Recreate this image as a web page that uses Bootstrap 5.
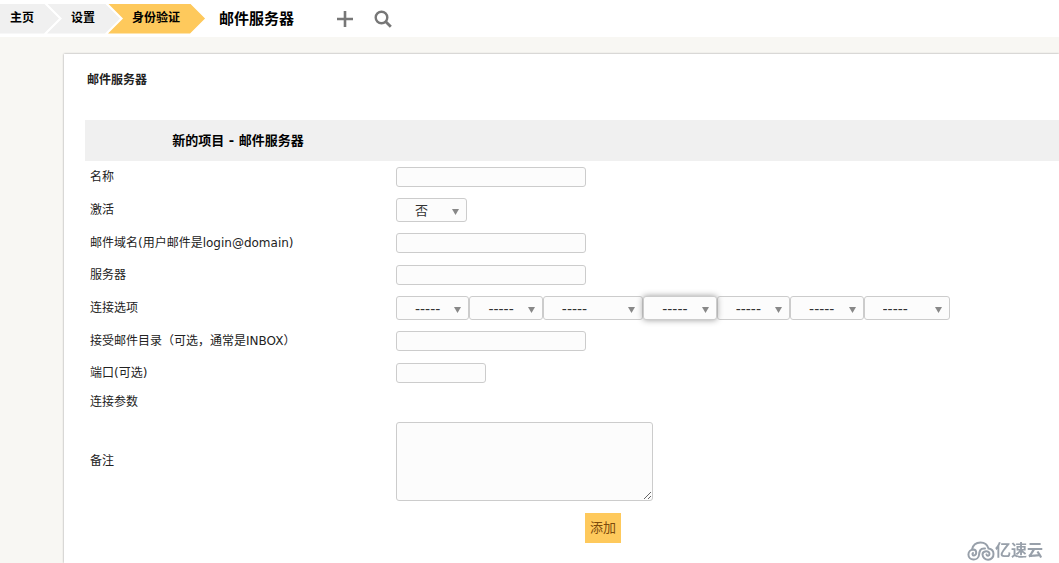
<!DOCTYPE html>
<html lang="zh-CN">
<head>
<meta charset="utf-8">
<meta name="viewport" content="width=device-width, initial-scale=1">
<title>邮件服务器</title>
<link href="https://cdn.jsdelivr.net/npm/bootstrap@5.3.0/dist/css/bootstrap.min.css" rel="stylesheet">
<style>
  body { background: #f8f7f3; color: #222; font: 12px/18px "DejaVu Sans", "Noto Sans CJK SC", sans-serif; }
  .topbar { height: 37px; }
  .crumbs a {
    display: block; height: 30px; line-height: 28px; margin-left: -12px; padding: 0 25px 0 24px;
    color: #000; background: #f0f0f0; font-weight: 700; text-decoration: none;
    clip-path: polygon(0 0, calc(100% - 15px) 0, 100% 50%, calc(100% - 15px) 100%, 0 100%, 15px 50%);
  }
  .crumbs li:first-child a { margin-left: 0; padding-left: 10px; clip-path: polygon(0 0, calc(100% - 15px) 0, 100% 50%, calc(100% - 15px) 100%, 0 100%); }
  .crumbs .current a { background: #fec95c; }
  .page-title { font-size: 15px; font-weight: 700; line-height: 20px; color: #000; margin-left: 14px; }
  .tools { margin-left: 42px; gap: 20px; }
  .tool { color: #777; line-height: 0; }
  .sheet { margin: 17px 0 0 64px; padding-left: 21px; box-shadow: 0 0 2px #999; }
  .sheet h2 { font-size: 12px; line-height: 18px; font-weight: 700; margin: 0; padding: 17px 2px 31px; }
  .form-grid { width: 100%; table-layout: fixed; }
  .form-grid th, .form-grid td { height: 32px; padding: 0 5px; vertical-align: middle; }
  .form-grid thead th { height: 41px; background: #f0f0f0; color: #000; font-size: 13px; text-align: center; }
  .form-grid tbody th { font-weight: 400; }
  .form-grid .tall > * { height: 34px; }
  .form-grid .plain > * { height: 26px; }
  .form-grid .notes > * { height: 92px; }
  .form-grid .submit > * { height: 42px; }
  .col-label { width: 306px; }
  .field { display: block; background: #fcfcfc; border: 1px solid #ccc; border-radius: 3px; color: #333; }
  input.field { width: 190px; height: 20px; padding: 0 4px; }
  input.field.narrow { width: 90px; }
  textarea.field { width: 257px; height: 79px; padding: 4px; }
  select.field {
    appearance: none; height: 24px; padding: 2px 18px 0; font-size: 13px; line-height: 20px;
    background: #fcfcfc url("data:image/svg+xml,%3Csvg xmlns='http://www.w3.org/2000/svg' width='7' height='6'%3E%3Cpath d='M0 0h7L3.5 6z' fill='%23888'/%3E%3C/svg%3E") no-repeat right 7px top 10px;
  }
  .yesno { width: 71px; }
  .options { max-width: 554px; }
  .options .field { flex: 1 1 73px; min-width: 0; font-size: 14px; padding-right: 10px; }
  .options .wide { flex-basis: 100px; }
  .options .medium { flex-basis: 86px; }
  .options .lit { box-shadow: 0 0 6px #999; z-index: 1; }
  .btn-add { margin-left: 189px; height: 30px; padding: 0 5px; border: 0; background: #fec95c; color: #7c4a0c; font-size: 13px; }
  .watermark { position: fixed; right: 16px; bottom: 2px; color: #98a0aa; font-size: 16px; font-weight: 700; line-height: 20px; }
</style>
</head>
<body class="d-flex flex-column min-vh-100">
<header class="topbar bg-white d-flex align-items-center flex-shrink-0">
  <nav aria-label="导航">
    <ul class="crumbs list-unstyled d-flex m-0">
      <li><a href="#">主页</a></li>
      <li><a href="#">设置</a></li>
      <li class="current"><a href="#">身份验证</a></li>
    </ul>
  </nav>
  <h1 class="page-title mb-0">邮件服务器</h1>
  <div class="tools d-flex align-items-center">
    <a href="#" class="tool" aria-label="添加">
      <svg width="18" height="18" viewBox="0 0 18 18"><path d="M9 1v16M1 9h16" stroke="currentColor" stroke-width="2.6"/></svg>
    </a>
    <a href="#" class="tool" aria-label="搜索">
      <svg width="18" height="18" viewBox="0 0 18 18" fill="none" stroke="currentColor"><circle cx="7.5" cy="7.5" r="5.8" stroke-width="2.4"/><path d="M11.8 11.8l5 5" stroke-width="2.8"/></svg>
    </a>
  </div>
</header>
<main class="sheet bg-white flex-grow-1">
  <h2>邮件服务器</h2>
  <form>
    <table class="form-grid">
      <colgroup><col class="col-label"><col></colgroup>
      <thead><tr><th>新的项目 - 邮件服务器</th><th></th></tr></thead>
      <tbody>
        <tr><th><label for="name">名称</label></th><td><input class="field" id="name" type="text"></td></tr>
        <tr class="tall"><th><label for="active">激活</label></th><td><select class="field yesno" id="active"><option>否</option><option>是</option></select></td></tr>
        <tr><th><label for="domain">邮件域名(用户邮件是login@domain)</label></th><td><input class="field" id="domain" type="text"></td></tr>
        <tr><th><label for="server">服务器</label></th><td><input class="field" id="server" type="text"></td></tr>
        <tr class="tall"><th><label for="option1">连接选项</label></th><td>
          <div class="options d-flex">
            <select class="field" id="option1"><option>-----</option></select>
            <select class="field" aria-label="连接选项 2"><option>-----</option></select>
            <select class="field wide" aria-label="连接选项 3"><option>-----</option></select>
            <select class="field lit" aria-label="连接选项 4"><option>-----</option></select>
            <select class="field" aria-label="连接选项 5"><option>-----</option></select>
            <select class="field" aria-label="连接选项 6"><option>-----</option></select>
            <select class="field medium" aria-label="连接选项 7"><option>-----</option></select>
          </div></td></tr>
        <tr><th><label for="folder">接受邮件目录（可选，通常是INBOX）</label></th><td><input class="field" id="folder" type="text"></td></tr>
        <tr><th><label for="port">端口(可选)</label></th><td><input class="field narrow" id="port" type="text"></td></tr>
        <tr class="plain"><th>连接参数</th><td></td></tr>
        <tr class="notes"><th><label for="notes">备注</label></th><td><textarea class="field" id="notes"></textarea></td></tr>
        <tr class="submit"><td></td><td><button class="btn-add" type="submit">添加</button></td></tr>
      </tbody>
    </table>
  </form>
</main>
<div class="watermark d-flex align-items-center">
  <svg width="28" height="20" viewBox="0 0 28 20" fill="none" stroke="currentColor" stroke-width="2" stroke-linecap="round"><path d="M5 8.5C6 4 9.5 1.5 13.5 1.5S20.5 4 21.5 7.500C25 8 26.500 10.500 26.500 13A5.500 5.500 0 0 1 15.500 13.500C15.500 9.500 22.500 9 22.500 13C22.500 15 20 15.500 19.500 13.500"/><path d="M18 7.500C13 7 12.500 10 12 14A5.300 5 0 1 1 6.500 8.500C10 8.500 10 14.500 7 14.500C5.500 14.500 5 13 6 12"/></svg>
  <span>亿速云</span>
</div>
<script src="https://cdn.jsdelivr.net/npm/bootstrap@5.3.0/dist/js/bootstrap.bundle.min.js"></script>
</body>
</html>
